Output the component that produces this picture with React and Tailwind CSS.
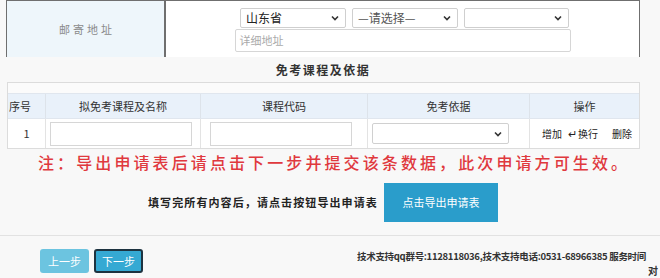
import React from "react";

const Chevron = () => (
  <svg width="8" height="6" viewBox="0 0 8 6" className="shrink-0">
    <path d="M1 1.5 L4 4.5 L7 1.5" fill="none" stroke="#333" strokeWidth="1.6" />
  </svg>
);

const Select = ({ w, text, muted }) => (
  <div
    className={`${w} h-[20px] bg-white border border-[#cfcfcf] rounded-[2px] flex items-center justify-between pl-[5px] pr-[6px]`}
  >
    <span className={`text-[12px] ${muted ? "text-[#555]" : "text-[#222]"}`}>{text}</span>
    <Chevron />
  </div>
);

export default function App() {
  return (
    <div
      className="w-[660px] h-[278px] overflow-hidden bg-[#f8f8f8] text-[#333]"
      style={{ fontFamily: '"Noto Sans CJK SC", "Noto Sans", sans-serif' }}
    >
      {/* Top address row */}
      <div className="ml-[6px] w-[634px] h-[57px] flex border-l border-r border-t border-[#6f6f6f]">
        <div className="w-[159px] bg-[#eef6fb] border-r-2 border-[#6f6f6f] flex items-center justify-center">
          <span className="text-[11px] text-[#8a8a8a] tracking-[3px] ml-[3px]">邮寄地址</span>
        </div>
        <div className="flex-1 bg-white flex flex-col items-center pt-[7px]">
          <div className="flex gap-[6px] ml-[4px]">
            <Select w="w-[106px]" text="山东省" />
            <Select w="w-[106px]" text="—请选择—" muted />
            <Select w="w-[105px]" text="" />
          </div>
          <div className="w-[336px] h-[23px] mt-[1px] bg-white border border-[#d6d6d6] rounded-[2px] flex items-center pl-[4px]">
            <span className="text-[11px] text-[#aaa]">详细地址</span>
          </div>
        </div>
      </div>

      {/* Title */}
      <div className="ml-[6px] w-[634px] h-[25px] flex items-center justify-center">
        <span className="text-[12px] font-bold text-[#333] tracking-[1.5px]">免考课程及依据</span>
      </div>

      {/* Table */}
      <div className="ml-[7px] w-[633px] border border-[#dcdcdc] bg-white">
        <div className="h-[10px] bg-[#fbfbfb]" />
        <div className="grid grid-cols-[38px_155px_167px_162px_1fr] h-[26px] bg-[#e9f1fa] border-y border-[#e0e6ee] text-[11px] text-[#333]">
          <div className="border-r border-[#dde3ea] flex items-center pl-[1px]">序号</div>
          <div className="border-r border-[#dde3ea] flex items-center justify-center">拟免考课程及名称</div>
          <div className="border-r border-[#dde3ea] flex items-center justify-center">课程代码</div>
          <div className="border-r border-[#dde3ea] flex items-center justify-center">免考依据</div>
          <div className="flex items-center justify-center">操作</div>
        </div>
        <div className="grid grid-cols-[38px_155px_167px_162px_1fr] h-[29px] text-[11px]">
          <div className="border-r border-[#e3e3e3] flex items-center justify-center">1</div>
          <div className="border-r border-[#e3e3e3] flex items-center pl-[4px]">
            <div className="w-[142px] h-[24px] border border-[#d6d6d6] bg-white" />
          </div>
          <div className="border-r border-[#e3e3e3] flex items-center pl-[9px]">
            <div className="w-[142px] h-[24px] border border-[#d6d6d6] bg-white" />
          </div>
          <div className="border-r border-[#e3e3e3] flex items-center pl-[4px]">
            <div className="w-[137px] h-[21px] border border-[#d0d0d0] rounded-[2px] bg-white flex items-center justify-end pr-[6px]">
              <Chevron />
            </div>
          </div>
          <div className="flex items-center pl-[12px] gap-[6px] text-[10px] text-[#222]">
            <span>增加</span>
            <span className="flex items-center">
              <span className="text-[11px] mr-[1px]">↵</span>换行
            </span>
            <span className="ml-[8px]">删除</span>
          </div>
        </div>
      </div>

      {/* Red notice */}
      <div className="h-[26px] flex items-center pl-[38px]">
        <span className="text-[16px] font-medium text-[#e0393e] tracking-[3.1px] whitespace-nowrap">
          注：导出申请表后请点击下一步并提交该条数据，此次申请方可生效。
        </span>
      </div>

      {/* Export row */}
      <div className="mt-[8px] flex items-center pl-[148px]">
        <span className="text-[11px] font-bold text-[#222] tracking-[1.1px] whitespace-nowrap">
          填写完所有内容后，请点击按钮导出申请表
        </span>
        <div className="ml-[6px] w-[114px] h-[39px] bg-[#2a9dcb] flex items-center justify-center">
          <span className="text-[11px] text-white">点击导出申请表</span>
        </div>
      </div>

      {/* Footer */}
      <div className="mt-[13px] border-t border-[#e2e2e2] flex">
        <div className="pl-[40px] pt-[13px] flex gap-[5px]">
          <div className="w-[49px] h-[24px] bg-[#6cc4e0] rounded-[3px] flex items-center justify-center">
            <span className="text-[11px] text-white">上一步</span>
          </div>
          <div className="w-[49px] h-[24px] bg-[#35a9d3] rounded-[3px] border-2 border-[#1d3340] flex items-center justify-center">
            <span className="text-[11px] text-white">下一步</span>
          </div>
        </div>
        <div className="ml-[214px] pt-[12px] flex-1 min-w-0 overflow-hidden">
          <div className="text-[9.5px] font-semibold text-[#333] whitespace-nowrap leading-[16px] tracking-[-0.3px]">
            技术支持qq群号:1128118036,技术支持电话:0531-68966385 服务时间
          </div>
          <div className="text-[10px] font-semibold text-[#333] whitespace-nowrap leading-[14px] text-right pr-[2px]">
            对
          </div>
        </div>
      </div>
    </div>
  );
}
